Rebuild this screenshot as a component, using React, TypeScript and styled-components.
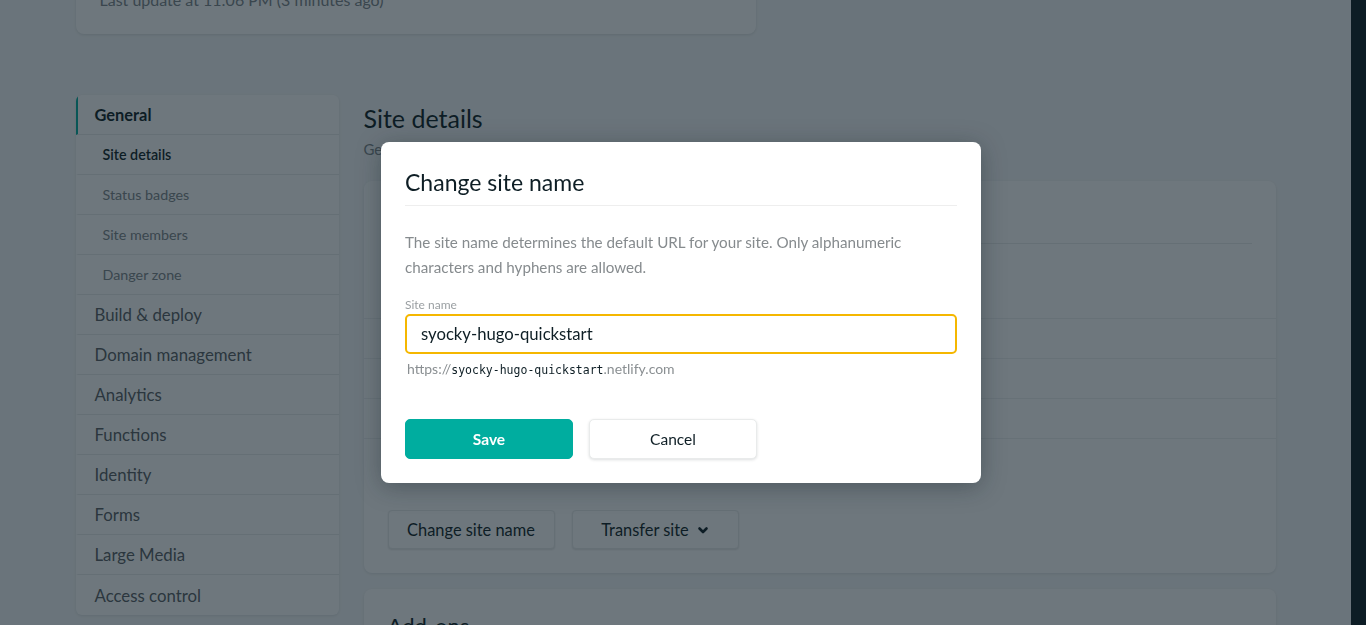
import React from "react";
import styled, { createGlobalStyle } from "styled-components";

const GlobalStyle = createGlobalStyle`
  html, body { margin: 0; padding: 0; }
  body {
    font-family: Lato, "Open Sans", "Noto Sans", sans-serif;
    color: #0e1e25;
    background: #f6f8f9;
  }
  * { box-sizing: border-box; }
`;

const Shell = styled.div`
  display: flex;
  height: 625px;
  overflow: hidden;
`;

const Page = styled.div`
  flex: 1;
  background: #f6f8f9;
  overflow: hidden;
`;

const ScrollStrip = styled.div`
  width: 15px;
  background: #0e1e25;
`;

const Container = styled.div`
  width: 1200px;
  margin: -60px auto 0;
`;

const TopCard = styled.section`
  width: 680px;
  background: #fff;
  border-radius: 8px;
  box-shadow: 0 1px 3px rgba(14, 30, 37, 0.12);
  padding: 24px 24px 22px;
  margin-bottom: 61px;
`;

const Meta = styled.p`
  margin: 0;
  font-size: 16px;
  line-height: 24px;
  color: #7d8589;
`;

const Layout = styled.div`
  display: grid;
  grid-template-columns: 263px 912px;
  column-gap: 25px;
  align-items: start;
`;

const Sidebar = styled.nav`
  background: #fff;
  border-radius: 6px;
  box-shadow: 0 1px 3px rgba(14, 30, 37, 0.1);
  overflow: hidden;
`;

const NavItem = styled.div<{ $sub?: boolean; $active?: boolean; $current?: boolean }>`
  height: 40px;
  display: flex;
  align-items: center;
  border-bottom: 1px solid #e9ebeb;
  border-left: 2px solid ${(p) => (p.$active ? "#00ad9f" : "transparent")};
  padding-left: ${(p) => (p.$sub ? "25px" : "17px")};
  font-size: ${(p) => (p.$sub ? "14.3px" : p.$active ? "16.4px" : "16.8px")};
  font-weight: ${(p) => (p.$active ? 700 : p.$current ? 600 : 400)};
  color: ${(p) =>
    p.$active || p.$current ? "#0e1e25" : p.$sub ? "#7d8589" : "#585e62"};
  &:last-child { border-bottom: none; }
`;

const Main = styled.main`
  padding-top: 8px;
`;

const PageTitle = styled.h1`
  margin: 0;
  font-size: 25px;
  font-weight: 400;
  line-height: 30px;
  color: #0e1e25;
`;

const PageSub = styled.p`
  margin: 4px 0 20px;
  font-size: 15px;
  line-height: 24px;
  color: #7d8589;
`;

const Card = styled.section`
  background: #fff;
  border-radius: 8px;
  box-shadow: 0 1px 3px rgba(14, 30, 37, 0.1);
  padding: 24px;
  margin-bottom: 16px;
`;

const CardTitle = styled.h2`
  margin: 0;
  font-size: 22px;
  font-weight: 400;
  line-height: 26px;
  padding-bottom: 12px;
  border-bottom: 1px solid #e9ebeb;
  color: #0e1e25;
`;

const Intro = styled.p`
  margin: 0;
  padding: 22px 0 28px;
  font-size: 15px;
  line-height: 24px;
  color: #7d8589;
`;

const InfoList = styled.dl`
  margin: 0 -24px;
`;

const InfoRow = styled.div`
  height: 40px;
  display: flex;
  align-items: center;
  padding: 0 24px;
  border-top: 1px solid #eef0f1;
  font-size: 15px;
`;

const InfoTerm = styled.dt`
  width: 140px;
  color: #7d8589;
`;

const InfoValue = styled.dd`
  margin: 0;
  color: #0e1e25;
`;

const ButtonRow = styled.div`
  display: flex;
  gap: 17px;
  margin-top: 32px;
`;

const GhostButton = styled.button`
  width: 167px;
  height: 39px;
  display: inline-flex;
  align-items: center;
  justify-content: center;
  gap: 8px;
  background: #fff;
  border: 1px solid #e9ebeb;
  border-radius: 4px;
  box-shadow: 0 1px 2px rgba(14, 30, 37, 0.12);
  font-family: inherit;
  font-size: 16.4px;
  color: #0e1e25;
  padding: 0;
`;

const Overlay = styled.div`
  position: fixed;
  inset: 0;
  background: rgba(14, 28, 38, 0.6);
  display: flex;
  justify-content: center;
  align-items: flex-start;
  padding: 142px 4px 0 0;
`;

const Modal = styled.div`
  width: 600px;
  background: #fff;
  border-radius: 8px;
  box-shadow: 0 4px 24px rgba(14, 30, 37, 0.35);
  padding: 24px;
`;

const ModalTitle = styled.h2`
  margin: 0;
  font-size: 23px;
  font-weight: 400;
  line-height: 30px;
  padding: 1px 0 8px;
  border-bottom: 1px solid #eeeeee;
  color: #0e1e25;
`;

const ModalText = styled.p`
  margin: 24px 0 0;
  font-size: 15.2px;
  line-height: 25px;
  color: #868b8e;
`;

const Field = styled.label`
  display: block;
  margin-top: 17px;
`;

const FieldLabel = styled.span`
  display: block;
  font-size: 12px;
  line-height: 16px;
  color: #9a9fa2;
`;

const TextInput = styled.input`
  display: block;
  width: 100%;
  height: 40px;
  margin-top: 1px;
  border: 2px solid #f5b700;
  border-radius: 5px;
  padding: 0 14px;
  font-family: inherit;
  font-size: 16.7px;
  color: #0e1e25;
  outline: none;
  background: #fff;
`;

const Hint = styled.p`
  margin: 5px 0 0 2px;
  font-size: 14px;
  line-height: 20px;
  color: #8a8f92;
`;

const Mono = styled.code`
  font-family: "DejaVu Sans Mono", "Liberation Mono", monospace;
  font-size: 11.5px;
  color: #0e1e25;
`;

const ModalActions = styled.div`
  display: flex;
  gap: 16px;
  margin-top: 39px;
`;

const ActionButton = styled.button<{ $primary?: boolean }>`
  width: 168px;
  height: 40px;
  border-radius: 5px;
  font-family: inherit;
  font-size: 15.5px;
  font-weight: ${(p) => (p.$primary ? 700 : 400)};
  color: ${(p) => (p.$primary ? "#fff" : "#0e1e25")};
  background: ${(p) => (p.$primary ? "#00ad9f" : "#fff")};
  border: 1px solid ${(p) => (p.$primary ? "#00ad9f" : "#e9ebeb")};
  box-shadow: ${(p) =>
    p.$primary ? "none" : "0 1px 3px rgba(14, 30, 37, 0.14)"};
  padding: 0;
`;

const Chevron = () => (
  <svg width="12" height="12" viewBox="0 0 12 12" aria-hidden="true">
    <path
      d="M2.5 4.5 L6 8 L9.5 4.5"
      fill="none"
      stroke="#0e1e25"
      strokeWidth="2.6"
      strokeLinecap="round"
      strokeLinejoin="round"
    />
  </svg>
);

const nav: { label: string; sub?: boolean; active?: boolean; current?: boolean }[] = [
  { label: "General", active: true },
  { label: "Site details", sub: true, current: true },
  { label: "Status badges", sub: true },
  { label: "Site members", sub: true },
  { label: "Danger zone", sub: true },
  { label: "Build & deploy" },
  { label: "Domain management" },
  { label: "Analytics" },
  { label: "Functions" },
  { label: "Identity" },
  { label: "Forms" },
  { label: "Large Media" },
  { label: "Access control" },
];

export default function App() {
  return (
    <>
      <GlobalStyle />
      <Shell>
        <Page>
          <Container>
            <TopCard>
              <Meta>Created at 11:03 PM</Meta>
              <Meta>Last update at 11:06 PM (3 minutes ago)</Meta>
            </TopCard>
            <Layout>
              <Sidebar>
                {nav.map((n) => (
                  <NavItem key={n.label} $sub={n.sub} $active={n.active} $current={n.current}>
                    {n.label}
                  </NavItem>
                ))}
              </Sidebar>
              <Main>
                <PageTitle>Site details</PageTitle>
                <PageSub>General information about your site</PageSub>
                <Card>
                  <CardTitle>Site information</CardTitle>
                  <Intro>Your site details</Intro>
                  <InfoList>
                    <InfoRow><InfoTerm>Site name:</InfoTerm><InfoValue>syocky</InfoValue></InfoRow>
                    <InfoRow><InfoTerm>Owner:</InfoTerm><InfoValue>syocky</InfoValue></InfoRow>
                    <InfoRow><InfoTerm>Site ID:</InfoTerm><InfoValue>8c2b</InfoValue></InfoRow>
                    <InfoRow><InfoTerm>Created:</InfoTerm><InfoValue>Today</InfoValue></InfoRow>
                  </InfoList>
                  <ButtonRow>
                    <GhostButton>Change site name</GhostButton>
                    <GhostButton>
                      Transfer site <Chevron />
                    </GhostButton>
                  </ButtonRow>
                </Card>
                <Card>
                  <CardTitle>Add-ons</CardTitle>
                </Card>
              </Main>
            </Layout>
          </Container>
        </Page>
        <ScrollStrip />
      </Shell>
      <Overlay>
        <Modal>
          <ModalTitle>Change site name</ModalTitle>
          <ModalText>
            The site name determines the default URL for your site. Only alphanumeric
            characters and hyphens are allowed.
          </ModalText>
          <Field>
            <FieldLabel>Site name</FieldLabel>
            <TextInput defaultValue="syocky-hugo-quickstart" />
          </Field>
          <Hint>
            https://<Mono>syocky-hugo-quickstart</Mono>.netlify.com
          </Hint>
          <ModalActions>
            <ActionButton $primary>Save</ActionButton>
            <ActionButton>Cancel</ActionButton>
          </ModalActions>
        </Modal>
      </Overlay>
    </>
  );
}
